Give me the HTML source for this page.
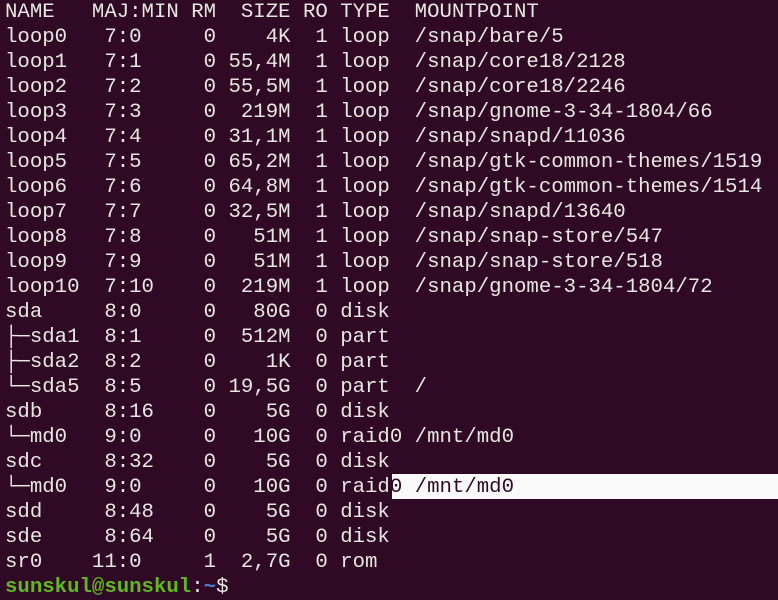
<!DOCTYPE html>
<html><head><meta charset="utf-8"><style>
html,body{margin:0;padding:0;width:778px;height:600px;overflow:hidden;background:#300a24;}
pre{margin:0;position:absolute;left:5px;top:0;font-family:"Liberation Mono","DejaVu Sans Mono",monospace;font-size:20.7px;line-height:25px;color:#e6e6e2;white-space:pre;}
.hl{position:absolute;left:392px;top:474px;width:386px;height:25px;background:#fafafa;}
.g{color:#5fb81e;font-weight:bold}
.b{color:#4f7fd0;font-weight:bold}
.d{color:#300a24}
</style></head><body>
<div class="hl"></div>
<pre>NAME   MAJ:MIN RM  SIZE RO TYPE  MOUNTPOINT
loop0   7:0     0    4K  1 loop  /snap/bare/5
loop1   7:1     0 55,4M  1 loop  /snap/core18/2128
loop2   7:2     0 55,5M  1 loop  /snap/core18/2246
loop3   7:3     0  219M  1 loop  /snap/gnome-3-34-1804/66
loop4   7:4     0 31,1M  1 loop  /snap/snapd/11036
loop5   7:5     0 65,2M  1 loop  /snap/gtk-common-themes/1519
loop6   7:6     0 64,8M  1 loop  /snap/gtk-common-themes/1514
loop7   7:7     0 32,5M  1 loop  /snap/snapd/13640
loop8   7:8     0   51M  1 loop  /snap/snap-store/547
loop9   7:9     0   51M  1 loop  /snap/snap-store/518
loop10  7:10    0  219M  1 loop  /snap/gnome-3-34-1804/72
sda     8:0     0   80G  0 disk
├─sda1  8:1     0  512M  0 part
├─sda2  8:2     0    1K  0 part
└─sda5  8:5     0 19,5G  0 part  /
sdb     8:16    0    5G  0 disk
└─md0   9:0     0   10G  0 raid0 /mnt/md0
sdc     8:32    0    5G  0 disk
└─md0   9:0     0   10G  0 raid<span class="d">0 /mnt/md0</span>
sdd     8:48    0    5G  0 disk
sde     8:64    0    5G  0 disk
sr0    11:0     1  2,7G  0 rom
<span class="g">sunskul@sunskul</span>:<span class="b">~</span>$</pre>
</body></html>
